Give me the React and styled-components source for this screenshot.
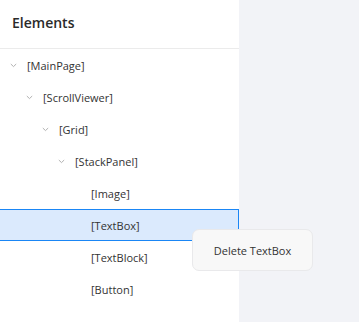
import React from 'react';
import styled, { createGlobalStyle } from 'styled-components';

const GlobalStyle = createGlobalStyle`
  html, body {
    margin: 0;
    padding: 0;
    background: #f2f3f7;
  }
  body {
    font-family: "Open Sans", "Liberation Sans", sans-serif;
  }
`;

const Page = styled.div`
  position: relative;
  display: flex;
  width: 359px;
  height: 322px;
  overflow: hidden;
  background: #f2f3f7;
`;

const Panel = styled.aside`
  width: 239px;
  height: 100%;
  background: #ffffff;
`;

const Header = styled.div`
  box-sizing: border-box;
  height: 49px;
  display: flex;
  align-items: center;
  padding: 0 0 4px 12px;
  border-bottom: 1px solid #ebebeb;
  font-size: 14px;
  font-weight: 600;
  color: #2a2a2a;
`;

const Row = styled.div`
  box-sizing: border-box;
  height: 32px;
  display: flex;
  align-items: center;
  padding-left: ${({ level }) => 10 + level * 16}px;
  font-size: 11px;
  color: #333333;
  background: ${({ selected }) => (selected ? '#dbeafd' : 'transparent')};
  border: 1px solid ${({ selected }) => (selected ? '#1a86f5' : 'transparent')};
  border-left: none;
`;

const Caret = styled.span`
  width: 17px;
  display: flex;
  align-items: center;
  svg {
    display: block;
  }
`;

const Menu = styled.div`
  position: absolute;
  left: 192px;
  top: 229px;
  width: 121px;
  height: 42px;
  box-sizing: border-box;
  display: flex;
  align-items: center;
  justify-content: center;
  background: #f8f8f8;
  border: 1px solid #e9e9eb;
  border-radius: 7px;
  font-size: 11px;
  color: #333333;
`;

const Chevron = () => (
  <svg width="7" height="5" viewBox="0 0 7 5">
    <path d="M0.8 1 L3.5 3.6 L6.2 1" fill="none" stroke="#a8a8a8" strokeWidth="0.9" />
  </svg>
);

const items = [
  { name: 'MainPage', level: 0, open: true },
  { name: 'ScrollViewer', level: 1, open: true },
  { name: 'Grid', level: 2, open: true },
  { name: 'StackPanel', level: 3, open: true },
  { name: 'Image', level: 4 },
  { name: 'TextBox', level: 4, selected: true },
  { name: 'TextBlock', level: 4 },
  { name: 'Button', level: 4 },
];

export default function App() {
  return (
    <Page>
      <GlobalStyle />
      <Panel>
        <Header>Elements</Header>
        {items.map((it) => (
          <Row key={it.name} level={it.level} selected={it.selected}>
            <Caret>{it.open && <Chevron />}</Caret>
            [{it.name}]
          </Row>
        ))}
      </Panel>
      <Menu>Delete TextBox</Menu>
    </Page>
  );
}
